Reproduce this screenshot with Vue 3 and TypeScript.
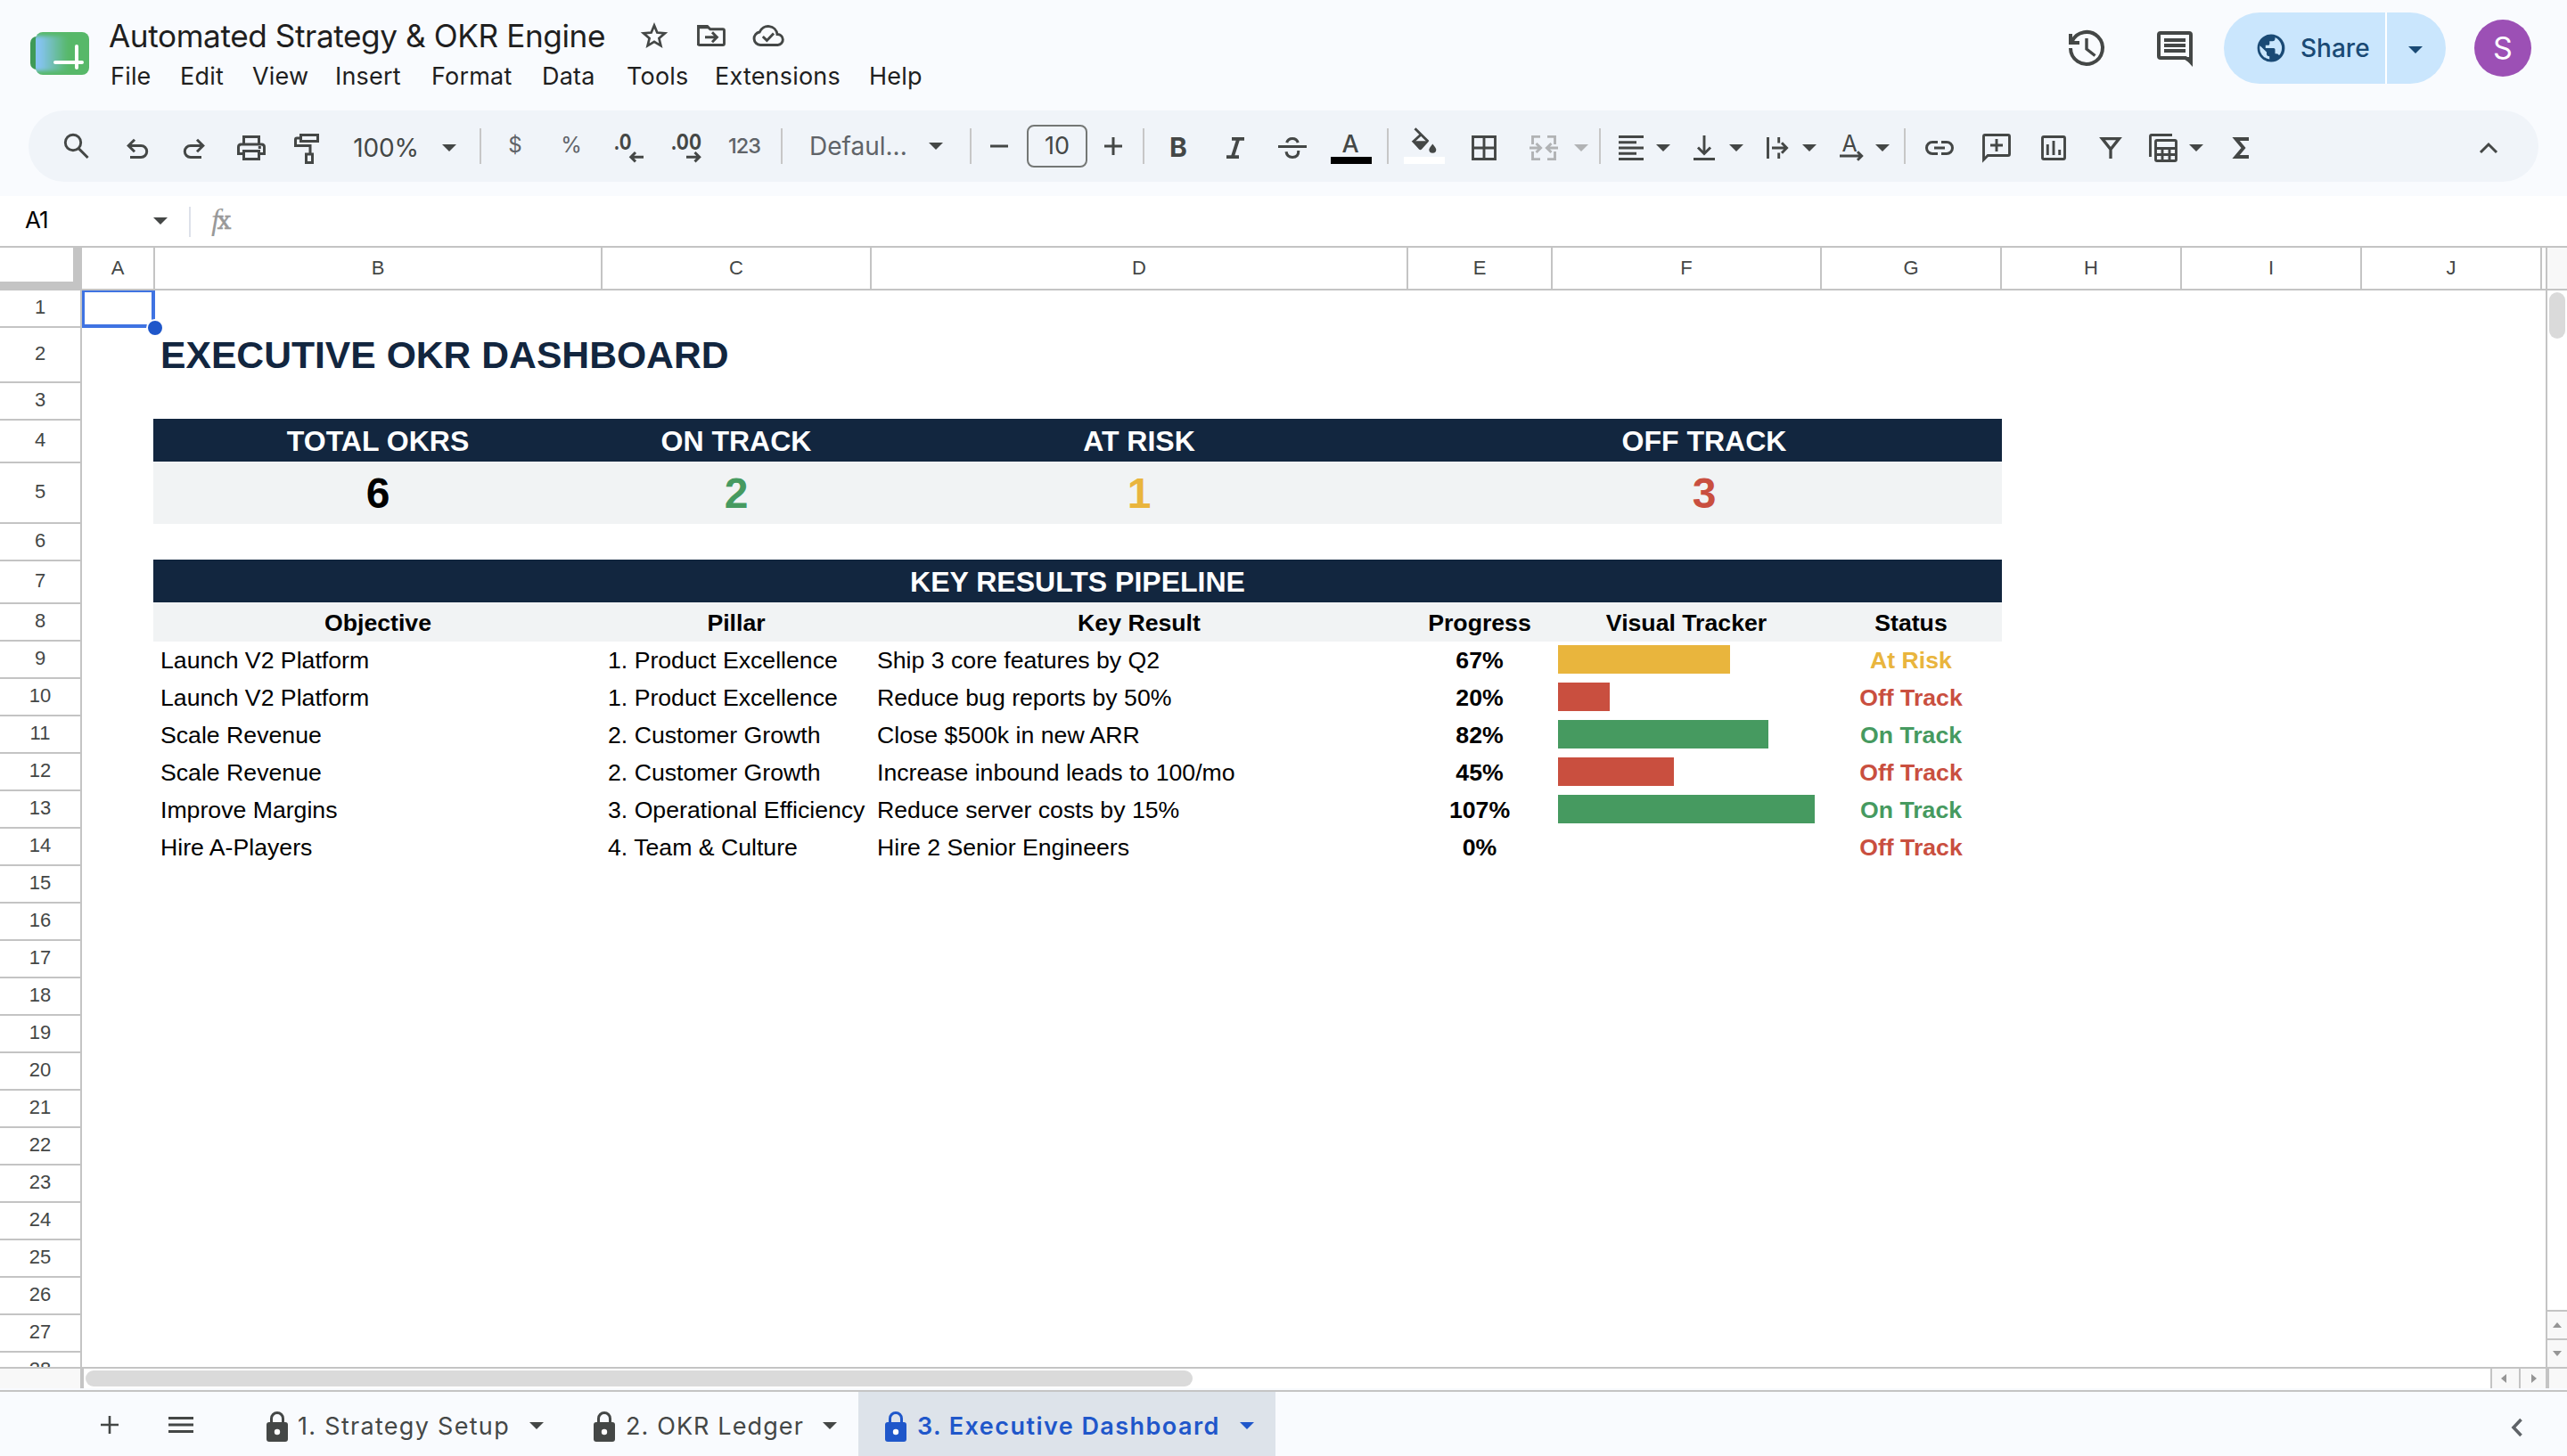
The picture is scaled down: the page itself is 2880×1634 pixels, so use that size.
<script setup lang="ts">
interface Glyph { s?: string; f?: string; w?: number }
interface Tool { t: 'icon' | 'caret' | 'sep' | 'text' | 'box'; gap: number; name?: string; cls?: string; w?: number }

const menus = [
  { label: 'File', w: 78 }, { label: 'Edit', w: 81 }, { label: 'View', w: 93 },
  { label: 'Insert', w: 108 }, { label: 'Format', w: 124 }, { label: 'Data', w: 95 },
  { label: 'Tools', w: 99 }, { label: 'Extensions', w: 173 }, { label: 'Help', w: 60 },
]

const icons: Record<string, Glyph> = {
  search: { s: 'M24.7 14a8.7 8.7 0 1 1-17.4 0a8.7 8.7 0 0 1 17.4 0zM22 20.4L32.6 31', w: 2.9 },
  undo: { s: 'M10 17.5H24.2a6.5 6.5 0 0 1 0 13H12M17 10.8L10.2 17.5L17 24.2', w: 3 },
  redo: { s: 'M30 17.5H15.8a6.5 6.5 0 0 0 0 13H28M23 10.8L29.8 17.5L23 24.2', w: 3 },
  print: { s: 'M11.5 15.5V7.5h17v8M11 26.5H5.5V19q0-3 3-3h23q3 0 3 3v7.5H29M11.5 23.5h17v9h-17z', f: 'M27.8 18h3v3h-3z', w: 3 },
  paint: { s: 'M13.5 5.5h19v7h-19zM13 9H9q-1.5 0-1.5 1.5V17.5H24V27M19.5 27h7v9.5h-7z', w: 3 },
  minus: { s: 'M10 18H30', w: 3 },
  plus: { s: 'M10 18H30M20 8V28', w: 3 },
  italic: { s: 'M16 9.9H30M10 30.1H24M23.2 10L16.8 30', w: 3.9 },
  strike: { s: 'M4 18.5H36M13.7 14.2q1.2-4.7 6.3-4.7q5 0 6.2 4.7M13 24.3q1 6.2 7 6.2q7 0 6.8-7.5', w: 3.1 },
  borders: { s: 'M7.5 7.5h25v25h-25zM20 7V33M7 20H33', w: 2.9 },
  merge: { s: 'M16 7.4H7.5V16M24 7.4h8.5V16M7.5 24v8.6H16M32.5 24v8.6H24M4 20H16M11.5 15L16.6 20L11.5 25M36 20H24M28.5 15L23.4 20L28.5 25', w: 2.9 },
  align: { s: 'M6 7.5H34M6 13.8H26M6 20H34M6 26.2H26M6 32.5H34', w: 2.9 },
  valign: { s: 'M8 32.5H32M20 6V26M13 19.5L20 26.5L27 19.5', w: 2.9 },
  wrap: { s: 'M9.5 8V32M21.7 8V14.5M21.7 25.5V32M14 20H30M25 14.2L30.6 20L25 25.8', w: 2.9 },
  link: { s: 'M18 13.5H12a6.5 6.5 0 0 0 0 13H18M22 13.5h6a6.5 6.5 0 0 1 0 13H22M14 20H26', w: 3 },
  comment: { s: 'M5.5 33.2V7q0-1.5 1.5-1.5H33q1.5 0 1.5 1.5V27q0 1.5-1.5 1.5H10.2zM20 10V24M13 17H27', w: 2.9 },
  chart: { s: 'M9 7.5H31q1.5 0 1.5 1.5V31q0 1.5-1.5 1.5H9q-1.5 0-1.5-1.5V9q0-1.5 1.5-1.5zM13.3 16V28M20 12V28M26.7 22V28', w: 2.9 },
  filter: { s: 'M10.5 9.6H29.5L20 21.6ZM20 20V32', w: 3.3 },
  tables: { s: 'M5.5 30V7q0-1.5 1.5-1.5H30M13 11.5H33q1.5 0 1.5 1.5V33q0 1.5-1.5 1.5H13q-1.5 0-1.5-1.5V13q0-1.5 1.5-1.5zM11 20.5H35M11 27.5H35M19 20V35M27 20V35', w: 2.9 },
  sigma: { s: 'M29 10H14.6L23 20L14.6 30H29', w: 3.9 },
  bucket: { s: 'M12.5-1.8L27.2 12.7M19.2 5L10 13.5', f: 'M8.6 12.2H28.4L20 21.5q-1.5 1.5-3 0ZM32.3 15.5q-4 5-4 6.3a4 4 0 0 0 8 0q0-1.3-4-6.3z', w: 2.9 },
  up: { s: 'M11 25L20 16L29 25', w: 3 },
  star: { s: 'M20 8.6L23.3 16.5L32 17.3L25.4 23L27.4 31.3L20 26.9L12.6 31.3L14.6 23L8 17.3L16.7 16.5Z', w: 2.7 },
  folder: { s: 'M5.5 31V9.5H15.5L18.8 12.8H33q1.5 0 1.5 1.5V29q0 1.5-1.5 1.5H7q-1.5 0-1.5-1.5M13 21.7H26M21 16.2L26.4 21.7L21 27.2', f: 'M5 8.5h11l3.5 3.8H5z', w: 2.9 },
  cloud: { s: 'M11 30.5a7.3 7.3 0 0 1-.8-14.5a10.3 10.3 0 0 1 19.8 2.5a6 6 0 0 1 .6 12zM13.8 21L18.4 25.4L26 17.6', w: 2.9 },
}

const tools: Tool[] = [
  { t: 'icon', name: 'search', gap: 34 }, { t: 'icon', name: 'undo', gap: 28 },
  { t: 'icon', name: 'redo', gap: 24 }, { t: 'icon', name: 'print', gap: 24 },
  { t: 'icon', name: 'paint', gap: 22 },
  { t: 'text', name: '100%', gap: 32, w: 74, cls: 'zoom' }, { t: 'caret', gap: 26 },
  { t: 'sep', gap: 26 },
  { t: 'text', name: '$', gap: 26, w: 24, cls: 'small' }, { t: 'text', name: '%', gap: 39, w: 24, cls: 'small' },
  { t: 'icon', name: 'decLess', gap: 35 }, { t: 'icon', name: 'decMore', gap: 24 },
  { t: 'text', name: '123', gap: 24, w: 38, cls: 'small num' },
  { t: 'sep', gap: 22 },
  { t: 'text', name: 'Defaul...', gap: 30, w: 106, cls: 'family' }, { t: 'caret', gap: 28, cls: 'high' },
  { t: 'sep', gap: 30 },
  { t: 'icon', name: 'minus', gap: 11 }, { t: 'box', name: '10', gap: 11, w: 68 }, { t: 'icon', name: 'plus', gap: 9 },
  { t: 'sep', gap: 13 },
  { t: 'text', name: 'B', gap: 18, w: 40, cls: 'bold' }, { t: 'icon', name: 'italic', gap: 24 },
  { t: 'icon', name: 'strike', gap: 24 }, { t: 'icon', name: 'textColor', gap: 23, w: 46 },
  { t: 'sep', gap: 17 },
  { t: 'icon', name: 'bucket', gap: 17, w: 46 }, { t: 'icon', name: 'borders', gap: 24 },
  { t: 'icon', name: 'merge', gap: 27, cls: 'off' }, { t: 'caret', gap: 14, cls: 'off' },
  { t: 'sep', gap: 12 },
  { t: 'icon', name: 'align', gap: 14 }, { t: 'caret', gap: 8 },
  { t: 'icon', name: 'valign', gap: 18 }, { t: 'caret', gap: 8 },
  { t: 'icon', name: 'wrap', gap: 18 }, { t: 'caret', gap: 8 },
  { t: 'icon', name: 'rotate', gap: 20 }, { t: 'caret', gap: 6 },
  { t: 'sep', gap: 16 },
  { t: 'icon', name: 'link', gap: 18 }, { t: 'icon', name: 'comment', gap: 24 },
  { t: 'icon', name: 'chart', gap: 24 }, { t: 'icon', name: 'filter', gap: 24 },
  { t: 'icon', name: 'tables', gap: 19 }, { t: 'caret', gap: 9 },
  { t: 'icon', name: 'sigma', gap: 22 },
]

const columns = [
  { name: 'A', w: 82 }, { name: 'B', w: 502 }, { name: 'C', w: 302 }, { name: 'D', w: 602 },
  { name: 'E', w: 162 }, { name: 'F', w: 302 }, { name: 'G', w: 202 }, { name: 'H', w: 202 },
  { name: 'I', w: 202 }, { name: 'J', w: 202 },
]
const special: Record<number, number> = { 2: 62, 4: 48, 5: 68, 7: 48 }
const rowNumbers = Array.from({ length: 28 }, (_, i) => ({ n: i + 1, h: special[i + 1] ?? 42 }))

const headings = ['Objective', 'Pillar', 'Key Result', 'Progress', 'Visual Tracker', 'Status']
const results = [
  { o: 'Launch V2 Platform', p: '1. Product Excellence', k: 'Ship 3 core features by Q2', v: 67, s: 'At Risk', c: 'risk' },
  { o: 'Launch V2 Platform', p: '1. Product Excellence', k: 'Reduce bug reports by 50%', v: 20, s: 'Off Track', c: 'bad' },
  { o: 'Scale Revenue', p: '2. Customer Growth', k: 'Close $500k in new ARR', v: 82, s: 'On Track', c: 'good' },
  { o: 'Scale Revenue', p: '2. Customer Growth', k: 'Increase inbound leads to 100/mo', v: 45, s: 'Off Track', c: 'bad' },
  { o: 'Improve Margins', p: '3. Operational Efficiency', k: 'Reduce server costs by 15%', v: 107, s: 'On Track', c: 'good' },
  { o: 'Hire A-Players', p: '4. Team & Culture', k: 'Hire 2 Senior Engineers', v: 0, s: 'Off Track', c: 'bad' },
]
const tabs = [
  { label: '1. Strategy Setup', w: 367, cls: 'first' },
  { label: '2. OKR Ledger', w: 327, cls: '' },
  { label: '3. Executive Dashboard', w: 468, cls: 'active' },
]
</script>

<template>
  <div class="app">
    <header class="top">
      <svg class="logo" width="66" height="48" viewBox="0 0 66 48">
        <defs>
          <linearGradient id="lg" x1="0" x2="1" y1="0" y2="0">
            <stop offset="0" stop-color="#86c4f7" /><stop offset=".3" stop-color="#84c3ee" />
            <stop offset="1" stop-color="#57b869" />
          </linearGradient>
          <clipPath id="lc"><rect x="6" y="0" width="60" height="48" rx="8" /></clipPath>
          <filter id="lb" x="-30%" y="-30%" width="160%" height="160%"><feGaussianBlur stdDeviation="2.2" /></filter>
        </defs>
        <rect x="0" y="5" width="20" height="37" rx="7" fill="#3f9a57" />
        <rect x="6" y="0" width="60" height="48" rx="8" fill="#57b869" />
        <g clip-path="url(#lc)"><rect x="-2" y="4.5" width="44" height="39" fill="url(#lg)" filter="url(#lb)" /></g>
        <path d="M52 16V40M28 34H58" stroke="#fff" stroke-width="4" stroke-linecap="round" fill="none" />
      </svg>
      <div class="heading">
        <div class="title-row">
          <span class="title">Automated Strategy &amp; OKR Engine</span>
          <svg v-for="n in ['star', 'folder', 'cloud']" :key="n" class="ico" width="40" height="40" viewBox="0 0 40 40">
            <path v-if="icons[n].f" :d="icons[n].f" fill="currentColor" />
            <path :d="icons[n].s" fill="none" stroke="currentColor" :stroke-width="icons[n].w" />
          </svg>
        </div>
        <nav class="menus"><span v-for="m in menus" :key="m.label" :style="{ width: m.w + 'px' }">{{ m.label }}</span></nav>
      </div>
      <div class="actions">
        <svg class="history" width="42" height="42" viewBox="0 0 42 42">
          <path d="M4.6 13.5A18 18 0 1 1 3 21" fill="none" stroke="currentColor" stroke-width="4" />
          <path d="M1 5V17H13V13H5V5z" fill="currentColor" />
          <path d="M21 10V22L30.5 29.5" fill="none" stroke="currentColor" stroke-width="3.4" />
        </svg>
        <svg class="notes" width="40" height="40" viewBox="0 0 40 40">
          <path d="M4 2H36q2 0 2 2V34L32 30H4q-2 0-2-2V4q0-2 2-2z" fill="none" stroke="currentColor" stroke-width="4" />
          <path d="M30 29H40V40z" fill="currentColor" />
          <path d="M8 10H32M8 16H32M8 22H32" stroke="currentColor" stroke-width="3.8" />
        </svg>
        <div class="share">
          <div class="share-main">
            <svg width="32" height="32" viewBox="0 0 32 32">
              <circle cx="16" cy="16" r="15.4" fill="#1a4a75" />
              <path d="M3.5 13.2L11 20.5V22.2q0 3 3.2 3V28.6A13 13 0 0 1 3.5 13.2zM20.5 4V5.2q0 3-3 3H14.3V11.3q0 1.5-1.5 1.5H9.8V16H19q1.5 0 1.5 1.5V22.2H22q2.2 0 3 2A13 13 0 0 0 20.5 4z" fill="#c9e6fd" />
            </svg>
            <span>Share</span>
          </div>
          <div class="share-more"><i class="caret"></i></div>
        </div>
        <div class="avatar">S</div>
      </div>
    </header>

    <div class="toolbar-wrap">
      <div class="toolbar">
        <template v-for="(t, i) in tools" :key="i">
          <i v-if="t.t === 'sep'" class="sep" :style="{ marginLeft: t.gap + 'px' }"></i>
          <i v-else-if="t.t === 'caret'" class="caret" :class="t.cls" :style="{ marginLeft: t.gap + 'px' }"></i>
          <span v-else-if="t.t === 'text'" class="tx" :class="t.cls" :style="{ marginLeft: t.gap + 'px', width: t.w + 'px' }">{{ t.name }}</span>
          <span v-else-if="t.t === 'box'" class="size-box" :style="{ marginLeft: t.gap + 'px', width: t.w + 'px' }">{{ t.name }}</span>
          <svg v-else class="ico" :class="t.cls" :width="t.w ?? 40" height="40" :viewBox="`0 0 ${t.w ?? 40} 40`" :style="{ marginLeft: t.gap + 'px' }">
            <template v-if="t.name === 'decLess'">
              <text x="0.5" y="22" class="dec" textLength="20" lengthAdjust="spacingAndGlyphs">.0</text>
              <path d="M34 30.2H20M25 25L19.8 30.2L25 35.4" fill="none" stroke="currentColor" stroke-width="3" />
            </template>
            <template v-else-if="t.name === 'decMore'">
              <text x="0.5" y="22" class="dec" textLength="34.5" lengthAdjust="spacingAndGlyphs">.00</text>
              <path d="M18 30.2H32M27.5 25L32.7 30.2L27.5 35.4" fill="none" stroke="currentColor" stroke-width="3" />
            </template>
            <template v-else-if="t.name === 'textColor'">
              <text x="22" y="25" class="letter" text-anchor="middle">A</text>
              <rect x="0" y="30" width="46" height="8" fill="#000" />
            </template>
            <template v-else-if="t.name === 'rotate'">
              <text x="17" y="24" class="letter thin" text-anchor="middle">A</text>
              <path d="M6 29H30M26 24.3L30.7 29L26 33.7" fill="none" stroke="currentColor" stroke-width="2.9" />
            </template>
            <template v-else>
              <rect v-if="t.name === 'bucket'" x="0" y="30" width="46" height="8" fill="#fff" />
              <path v-if="icons[t.name!].f" :d="icons[t.name!].f" fill="currentColor" />
              <path :d="icons[t.name!].s" fill="none" stroke="currentColor" :stroke-width="icons[t.name!].w" />
            </template>
          </svg>
        </template>
        <svg class="ico collapse" width="40" height="40" viewBox="0 0 40 40"><path :d="icons.up.s" fill="none" stroke="currentColor" stroke-width="3" /></svg>
      </div>
    </div>

    <div class="formula">
      <span class="ref">A1</span><i class="caret"></i><i class="fsep"></i>
      <span class="fx"><em>f</em><b>x</b></span>
    </div>

    <div class="col-head">
      <div class="corner"></div>
      <div v-for="c in columns" :key="c.name" class="col" :style="{ width: c.w + 'px' }">{{ c.name }}</div>
      <div class="col sliver"></div>
      <div class="col-end"></div>
    </div>

    <div class="body">
      <div class="row-head"><div v-for="r in rowNumbers" :key="r.n" :style="{ height: r.h + 'px' }">{{ r.n }}</div></div>
      <div class="sheet">
        <div class="selection"><i class="handle"></i></div>
        <div class="r sheet-title"><span>EXECUTIVE OKR DASHBOARD</span></div>
        <div class="r kpi-head"><span>TOTAL OKRS</span><span>ON TRACK</span><span>AT RISK</span><span class="wide">OFF TRACK</span></div>
        <div class="r kpi"><span>6</span><span class="good">2</span><span class="risk">1</span><span class="wide bad">3</span></div>
        <div class="r pipeline"><span>KEY RESULTS PIPELINE</span></div>
        <div class="r heads"><span v-for="h in headings" :key="h">{{ h }}</span></div>
        <div v-for="(k, i) in results" :key="i" class="r data">
          <span>{{ k.o }}</span><span>{{ k.p }}</span><span>{{ k.k }}</span>
          <span class="mid">{{ k.v }}%</span>
          <div class="track"><div class="bar" :class="k.c" :style="{ width: Math.min(k.v, 100) + '%' }"></div></div>
          <span class="mid" :class="k.c">{{ k.s }}</span>
        </div>
      </div>
      <div class="vscroll">
        <div class="vthumb"></div>
        <div class="vbtn first"><svg width="12" height="8" viewBox="0 0 12 8"><path d="M6 1L11 7H1z" fill="#959595" /></svg></div>
        <div class="vbtn"><svg width="12" height="8" viewBox="0 0 12 8"><path d="M6 7L11 1H1z" fill="#959595" /></svg></div>
      </div>
    </div>

    <div class="hscroll">
      <div class="hcorner"></div>
      <div class="hthumb"></div>
      <div class="hbtn"><svg width="8" height="12" viewBox="0 0 8 12"><path d="M1 6L7 1V11z" fill="#959595" /></svg></div>
      <div class="hbtn second"><svg width="8" height="12" viewBox="0 0 8 12"><path d="M7 6L1 1V11z" fill="#959595" /></svg></div>
      <div class="hend"></div>
    </div>

    <footer class="tabs">
      <svg class="add" width="20" height="20" viewBox="0 0 20 20"><path d="M10 0V20M0 10H20" stroke="currentColor" stroke-width="2.6" /></svg>
      <svg class="all" width="28" height="18" viewBox="0 0 28 18"><path d="M0 1.5H28M0 9H28M0 16.5H28" stroke="currentColor" stroke-width="2.8" /></svg>
      <div v-for="(t, i) in tabs" :key="i" class="tab" :class="t.cls" :style="{ width: t.w + 'px' }">
        <svg width="24" height="34" viewBox="0 0 24 34">
          <path d="M5.5 14V8a6.5 6.5 0 0 1 13 0V14" fill="none" stroke="currentColor" stroke-width="3" />
          <rect x="0" y="12" width="24" height="22" rx="3" fill="currentColor" /><circle cx="12" cy="23" r="3.2" fill="#fff" />
        </svg>
        <span>{{ t.label }}</span><i class="caret"></i>
      </div>
      <svg class="prev" width="14" height="22" viewBox="0 0 14 22"><path d="M11.5 2L3 11L11.5 20" fill="none" stroke="#5f6368" stroke-width="3.6" /></svg>
    </footer>
  </div>
</template>

<style>
body { margin: 0; background: #fff; }
</style>

<style scoped>
* { box-sizing: border-box; }
.app { width: 2880px; height: 1634px; overflow: hidden; background: #fff; color: #444746; font-family: Inter, Roboto, sans-serif; display: flex; flex-direction: column; }
.app > * { flex: none; }
i { font-style: normal; display: block; }
svg { display: block; flex: none; overflow: visible; }
.top { height: 124px; background: #f9fbfe; display: flex; align-items: flex-start; }
.logo { margin: 36px 0 0 34px; }
.heading { margin: 18px 0 0 22px; }
.title-row { display: flex; align-items: center; height: 44px; gap: 24px; }
.title { width: 568px; color: #1f1f1f; font-size: 35.2px; line-height: 44px; letter-spacing: -.42px; white-space: nowrap; }
.menus { display: flex; margin: 8px 0 0 2px; color: #1f1f1f; font-size: 27px; letter-spacing: .2px; line-height: 32px; white-space: nowrap; }
.actions { margin-left: auto; display: flex; align-items: center; height: 80px; margin-top: 14px; padding-right: 40px; }
.history { margin-right: 58px; }
.notes { margin: 2px 35px 0 0; }
.share { display: flex; height: 80px; border-radius: 40px; overflow: hidden; background: #cae6fd; color: #1a4a75; margin-right: 32px; }
.share-main { width: 183px; border-right: 2px solid #fff; display: flex; align-items: center; padding-left: 37px; font-size: 28px; font-weight: 500; }
.share-main span { margin-left: 17px; }
.share-more { width: 66px; display: flex; align-items: center; padding: 4px 0 0 24px; }
.avatar { width: 64px; height: 64px; border-radius: 50%; background: #9c50b5; color: #fff; font-size: 34px; line-height: 64px; text-align: center; }
.caret { width: 16px; height: 8px; background: currentColor; clip-path: polygon(0 0, 100% 0, 50% 100%); flex: none; }
.toolbar-wrap { height: 96px; background: #f9fbfe; padding: 0 32px; }
.toolbar { height: 80px; border-radius: 40px; background: #f0f4f9; display: flex; align-items: center; padding-top: 4px; }
.toolbar > * { flex: none; }
.toolbar .collapse { margin-left: auto; margin-right: 36px; }
.sep { width: 2px; height: 40px; background: #c7c7c7; margin-bottom: 4px; }
.high { margin-bottom: 4px; }
.off { color: #b1b3b5; }
.tx { line-height: 40px; font-size: 28px; white-space: nowrap; text-align: center; display: flex; justify-content: center; }
.zoom { letter-spacing: -.2px; }
.small { font-size: 24px; color: #5f6368; margin-bottom: 6px; }
.num { font-size: 23.5px; font-weight: 500; letter-spacing: -1px; margin-bottom: 5px; }
.family { color: #5f6368; margin-bottom: 4px; justify-content: flex-start; }
.bold { font-weight: 700; font-size: 30px; margin-bottom: 2px; }
.size-box { height: 48px; border: 2px solid #747775; border-radius: 8px; font-size: 27px; line-height: 44px; text-align: center; margin-bottom: 4px; }
.dec { font: 700 24px Inter, sans-serif; fill: currentColor; }
.letter { font: 500 27px Inter, sans-serif; fill: currentColor; }
.thin { font-size: 25px; font-weight: 400; }
.formula { height: 56px; display: flex; align-items: center; background: #fff; }
.ref { width: 145px; padding-left: 28px; color: #000; font-size: 26px; margin-bottom: 4px; letter-spacing: -1px; }
.formula .caret { margin-left: 27px; }
.fsep { width: 2px; height: 34px; background: #dde1ea; margin: 2px 23px 0 24px; }
.fx { color: #999; font: 34px/40px "Liberation Serif", serif; display: flex; }
.fx b { font: 400 28px/42px "DejaVu Serif", serif; margin-left: -3px; -webkit-text-stroke: .6px #999; }
.col-head { height: 50px; border-top: 2px solid #c4c4c4; border-bottom: 2px solid #c4c4c4; display: flex; font: 22px/45px "Liberation Sans", Arial, sans-serif; text-align: center; }
.corner { width: 92px; border-right: 10px solid #c4c4c4; border-bottom: 8px solid #c4c4c4; }
.col { border-right: 2px solid #c4c4c4; }
.sliver { width: 6px; }
.col-end { flex: 1; background: #f8f8f8; }
.body { height: 1208px; display: flex; overflow: hidden; }
.row-head { width: 92px; border-right: 2px solid #c4c4c4; font: 22px/1 "Liberation Sans", Arial, sans-serif; }
.row-head div { border-bottom: 2px solid #c4c4c4; display: flex; align-items: center; justify-content: center; padding-bottom: 3px; }
.sheet { width: 2764px; position: relative; padding-left: 80px; font: 26.667px/30px "Liberation Sans", Arial, sans-serif; color: #000; }
.selection { position: absolute; left: 0; top: 0; width: 82px; height: 42px; border: 2px solid #3f73e2; border-right-width: 4px; border-bottom-width: 4px; border-left-width: 3px; }
.handle { position: absolute; left: 69px; top: 30px; width: 20px; height: 20px; border-radius: 50%; background: #1f57ca; border: 2px solid #fff; }
.r { display: grid; grid-template-columns: 502px 302px 602px 162px 302px 202px; width: 2074px; align-items: end; white-space: nowrap; }
.r > span { padding: 0 0 5px 2px; text-align: center; }
.sheet-title { margin-top: 40px; height: 62px; color: #12263f; font-weight: 700; font-size: 42.667px; line-height: 48px; }
.r.sheet-title > span { text-align: left; padding: 0 0 6px 8px; }
.kpi-head { margin-top: 42px; height: 48px; background: #12263f; color: #fff; font-weight: 700; font-size: 32px; line-height: 36px; }
.wide { grid-column: 4 / 7; }
.kpi { height: 70px; padding-bottom: 2px; background: #f1f3f4; font-weight: 700; font-size: 48px; line-height: 54px; }
.r.kpi > span { padding-bottom: 5px; }
.pipeline { margin-top: 40px; height: 48px; background: #12263f; color: #fff; font-weight: 700; font-size: 32px; line-height: 36px; }
.pipeline > span { grid-column: 1 / 7; }
.heads { height: 44px; padding-bottom: 2px; background: #f1f3f4; font-weight: 700; }
.r.heads > span { padding-bottom: 4px; }
.data { height: 42px; }
.heads + .data { margin-top: -2px; }
.r.data > span { text-align: left; padding: 0 0 4px 8px; }
.r.data > .mid { text-align: center; padding-left: 2px; font-weight: 700; }
.good { color: #469a60; }
.risk { color: #e9b53d; }
.bad { color: #c94f3f; }
.track { margin: 0 6px 4px 8px; height: 32px; }
.bar { height: 32px; }
.bar.good { background: #469a60; }
.bar.risk { background: #e9b53d; }
.bar.bad { background: #c94f3f; }
.vscroll { width: 24px; border-left: 2px solid #c4c4c4; display: flex; flex-direction: column; }
.vthumb { width: 18px; height: 52px; margin: 2px 0 0 2px; border-radius: 9px; background: #dadada; }
.vbtn { height: 32px; border-top: 2px solid #c4c4c4; background: #f8f8f8; display: flex; align-items: center; padding-left: 5px; }
.vbtn.first { margin-top: auto; }
.hscroll { height: 28px; border-top: 2px solid #c4c4c4; border-bottom: 2px solid #c4c4c4; display: flex; box-shadow: inset 0 -2px #f9fbfe; }
.hcorner { width: 94px; height: 22px; background: #f8f8f8; border-right: 4px solid #c4c4c4; }
.hthumb { width: 1242px; height: 18px; margin: 2px auto 0 2px; border-radius: 9px; background: #dadada; }
.hbtn { width: 32px; height: 22px; border-left: 2px solid #c4c4c4; background: #f8f8f8; display: flex; align-items: center; padding-left: 9px; }
.hbtn.second { width: 30px; padding-left: 11px; }
.hend { width: 24px; height: 22px; border-left: 4px solid #c4c4c4; background: #f8f8f8; }
.tabs { height: 72px; background: #f9fbfe; display: flex; align-items: center; }
.add { margin: 2px 0 0 113px; }
.all { margin: 2px 52px 0 56px; }
.tab { height: 72px; display: flex; align-items: center; padding: 4px 24px 0 30px; font-size: 27px; letter-spacing: 1.1px; }
.tab.first { padding-right: 26px; }
.tab.first span { margin-left: 11px; letter-spacing: 1.3px; }
.tab svg { margin-top: 2px; }
.tab span { margin-left: 12px; white-space: nowrap; }
.tab .caret { margin-left: auto; }
.tab.active { background: #dde3ea; color: #1f57ca; font-weight: 600; letter-spacing: 1.45px; }
.prev { margin: 8px 49px 0 auto; }
</style>
